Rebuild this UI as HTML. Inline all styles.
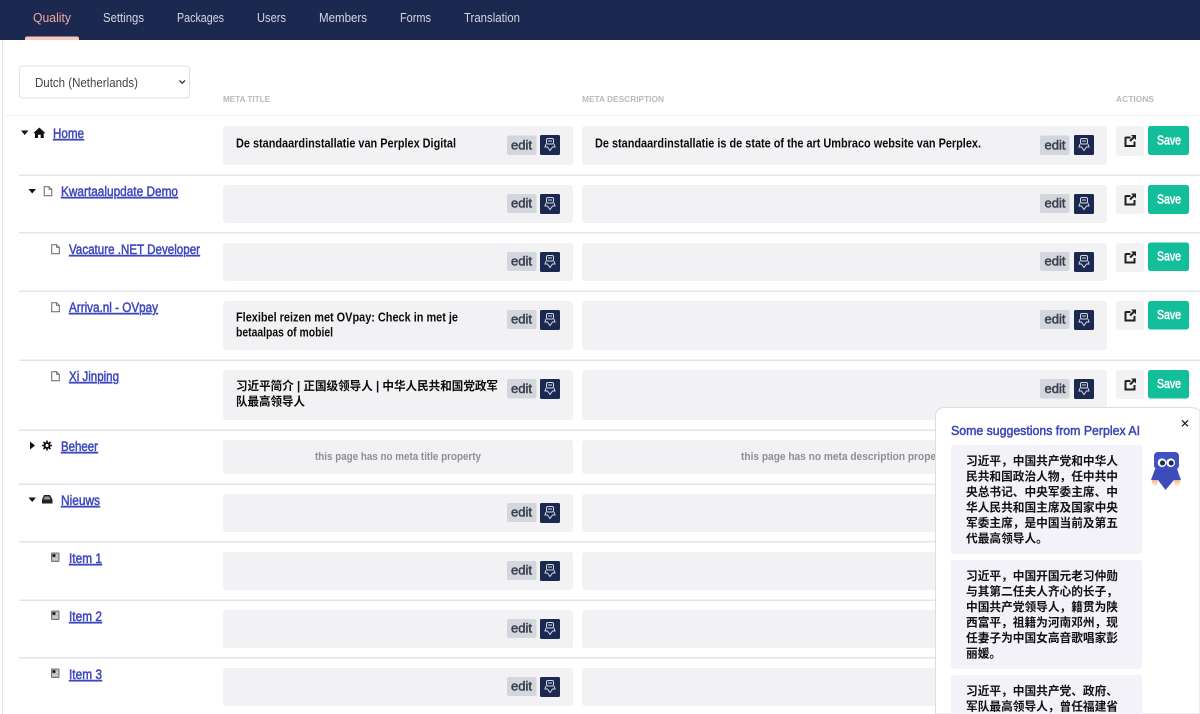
<!DOCTYPE html>
<html><head><meta charset="utf-8"><title>Quality</title>
<style>
html,body{margin:0;padding:0;background:#fff;width:1200px;height:714px;overflow:hidden}
svg{display:block;font-family:"Liberation Sans","Noto Sans CJK SC",sans-serif}
.n{font-size:13px;fill:#d5d8e2}
.h{font-size:8.5px;font-weight:700;fill:#b9b9c1}
.l{font-size:13.5px;fill:#3d48bc;stroke:#3d48bc;stroke-width:.5px;text-decoration:underline}
.t{font-size:12.5px;font-weight:700;fill:#0c0c0c}
.e{font-size:13px;fill:#3a3f4d;stroke:#3a3f4d;stroke-width:.5px}
.s{font-size:12.5px;fill:#fff;stroke:#fff;stroke-width:.5px}
.g{font-size:11px;font-weight:700;fill:#8e8e95}
.c{font-size:11.7px;font-weight:700;fill:#111}
</style></head><body>
<svg xmlns="http://www.w3.org/2000/svg" width="1200" height="714" viewBox="0 0 1200 714">
<defs>
<g id="b"><rect width="20" height="20" rx="1.5" fill="#1b2850"/><g fill="none" stroke="#d5d9e6" stroke-width="1"><rect x="6.500" y="3.500" width="7" height="5.500" rx="1.500"/><path d="M8 6h4"/><path d="M6 9 5 12H7.500L10 15.500 12.500 12H15L14 9"/></g></g>
<g id="o"><path d="M1 2.500H6M1 2V11H10V6.500" fill="none" stroke="#222" stroke-width="2"/><path d="M6.500 0H11.500V5L9.800 3.300 6.300 6.800 4.800 5.300 8.300 1.700Z" fill="#222"/></g>
<g id="d"><path d="M.7.7H5.500L8.300 3.500V9.800H.7Z" fill="#fff" stroke="#666" stroke-width="1"/><path d="M5.500.7V3.500H8.300" fill="none" stroke="#666" stroke-width=".8"/></g>
<g id="i"><rect width="8.500" height="9.500" rx="1" fill="#777"/><rect x="1" y="1" width="6.500" height="7.500" fill="#aaa"/><rect x="1.500" y="1.800" width="2.800" height="2.500" fill="#111"/><path d="M5 2.400H7.200M5 3.800H7.200M1.500 5.600H7.200M1.500 7.200H7.200" stroke="#ddd" stroke-width=".8"/></g>
<linearGradient id="f" x1="0" y1="0" x2="0" y2="1"><stop offset="0" stop-color="#f2b48a"/><stop offset="1" stop-color="#fdf1e8"/></linearGradient>
</defs>

<rect x="0" y="0" width="1200" height="40" fill="#1b2850"/>
<path d="M25 40V38.500Q25 36.500 27 36.500H77Q79 36.500 79 38.500V40Z" fill="#fbc7c1"/>
<text x="33" y="22" class="n" style="fill:#f4a9a0" textLength="38" lengthAdjust="spacingAndGlyphs">Quality</text>
<text x="103" y="22" class="n" textLength="41" lengthAdjust="spacingAndGlyphs">Settings</text>
<text x="177" y="22" class="n" textLength="47" lengthAdjust="spacingAndGlyphs">Packages</text>
<text x="257" y="22" class="n" textLength="29" lengthAdjust="spacingAndGlyphs">Users</text>
<text x="319" y="22" class="n" textLength="48" lengthAdjust="spacingAndGlyphs">Members</text>
<text x="400" y="22" class="n" textLength="31" lengthAdjust="spacingAndGlyphs">Forms</text>
<text x="464" y="22" class="n" textLength="56" lengthAdjust="spacingAndGlyphs">Translation</text>

<rect x="2" y="40" width="1" height="674" fill="#e2e2e6"/>
<rect x="3" y="115" width="1197" height="1" fill="#f4f4f6"/>

<rect x="19.500" y="66" width="170" height="32" rx="3" fill="#fff" stroke="#e1e1e5"/>
<text x="35" y="87" font-size="12.500" fill="#444" textLength="103" lengthAdjust="spacingAndGlyphs">Dutch (Netherlands)</text>
<path d="M179.500 80.500 182.200 83.200 185 80.500" fill="none" stroke="#333" stroke-width="1.300"/>

<text x="223" y="102" class="h" textLength="47" lengthAdjust="spacingAndGlyphs">META TITLE</text>
<text x="582" y="102" class="h" textLength="82" lengthAdjust="spacingAndGlyphs">META DESCRIPTION</text>
<text x="1116" y="102" class="h" textLength="38" lengthAdjust="spacingAndGlyphs">ACTIONS</text>

<g fill="#e4e4ea">
<rect x="19" y="174.500" width="1181" height="1.500"/>
<rect x="19" y="232" width="1181" height="1.500"/>
<rect x="19" y="290.500" width="1181" height="1.500"/>
<rect x="19" y="359.500" width="1181" height="1.500"/>
<rect x="19" y="429.500" width="1181" height="1.500"/>
<rect x="19" y="483.500" width="1181" height="1.500"/>
<rect x="19" y="541" width="1181" height="1.500"/>
<rect x="19" y="599.500" width="1181" height="1.500"/>
<rect x="19" y="657" width="1181" height="1.500"/>
</g>

<g fill="#f2f2f4">
<rect x="223" y="126" width="350" height="39" rx="3"/><rect x="582" y="126" width="525" height="39" rx="3"/><rect x="1116" y="126" width="28" height="30" rx="3"/>
<rect x="223" y="185" width="350" height="38" rx="3"/><rect x="582" y="185" width="525" height="38" rx="3"/><rect x="1116" y="185" width="28" height="29" rx="3"/>
<rect x="223" y="243" width="350" height="38" rx="3"/><rect x="582" y="243" width="525" height="38" rx="3"/><rect x="1116" y="243" width="28" height="29" rx="3"/>
<rect x="223" y="301" width="350" height="49" rx="3"/><rect x="582" y="301" width="525" height="49" rx="3"/><rect x="1116" y="301" width="28" height="29" rx="3"/>
<rect x="223" y="370" width="350" height="50" rx="3"/><rect x="582" y="370" width="525" height="50" rx="3"/><rect x="1116" y="370" width="28" height="29" rx="3"/>
<rect x="223" y="440" width="350" height="34" rx="3"/><rect x="582" y="440" width="525" height="34" rx="3"/>
<rect x="223" y="494" width="350" height="38" rx="3"/><rect x="582" y="494" width="525" height="38" rx="3"/>
<rect x="223" y="552" width="350" height="38" rx="3"/><rect x="582" y="552" width="525" height="38" rx="3"/>
<rect x="223" y="610" width="350" height="38" rx="3"/><rect x="582" y="610" width="525" height="38" rx="3"/>
<rect x="223" y="668" width="350" height="38" rx="3"/><rect x="582" y="668" width="525" height="38" rx="3"/>
</g>

<g fill="#d4d6dd">
<rect x="507" y="135.500" width="29.500" height="19.500" rx="2"/><rect x="1040" y="135.500" width="29.500" height="19.500" rx="2"/>
<rect x="507" y="194" width="29.500" height="19" rx="2"/><rect x="1040" y="194" width="29.500" height="19" rx="2"/>
<rect x="507" y="252" width="29.500" height="19" rx="2"/><rect x="1040" y="252" width="29.500" height="19" rx="2"/>
<rect x="507" y="310" width="29.500" height="19" rx="2"/><rect x="1040" y="310" width="29.500" height="19" rx="2"/>
<rect x="507" y="379" width="29.500" height="19.500" rx="2"/><rect x="1040" y="379" width="29.500" height="19.500" rx="2"/>
<rect x="507" y="503" width="29.500" height="19" rx="2"/>
<rect x="507" y="561" width="29.500" height="19" rx="2"/>
<rect x="507" y="619" width="29.500" height="19" rx="2"/>
<rect x="507" y="677" width="29.500" height="19" rx="2"/>
</g>
<g>
<text x="511" y="149.500" class="e" textLength="21" lengthAdjust="spacingAndGlyphs">edit</text><text x="1044.500" y="149.500" class="e" textLength="21" lengthAdjust="spacingAndGlyphs">edit</text>
<text x="511" y="207.500" class="e" textLength="21" lengthAdjust="spacingAndGlyphs">edit</text><text x="1044.500" y="207.500" class="e" textLength="21" lengthAdjust="spacingAndGlyphs">edit</text>
<text x="511" y="265.500" class="e" textLength="21" lengthAdjust="spacingAndGlyphs">edit</text><text x="1044.500" y="265.500" class="e" textLength="21" lengthAdjust="spacingAndGlyphs">edit</text>
<text x="511" y="323.500" class="e" textLength="21" lengthAdjust="spacingAndGlyphs">edit</text><text x="1044.500" y="323.500" class="e" textLength="21" lengthAdjust="spacingAndGlyphs">edit</text>
<text x="511" y="393" class="e" textLength="21" lengthAdjust="spacingAndGlyphs">edit</text><text x="1044.500" y="393" class="e" textLength="21" lengthAdjust="spacingAndGlyphs">edit</text>
<text x="511" y="516.500" class="e" textLength="21" lengthAdjust="spacingAndGlyphs">edit</text>
<text x="511" y="574.500" class="e" textLength="21" lengthAdjust="spacingAndGlyphs">edit</text>
<text x="511" y="632.500" class="e" textLength="21" lengthAdjust="spacingAndGlyphs">edit</text>
<text x="511" y="690.500" class="e" textLength="21" lengthAdjust="spacingAndGlyphs">edit</text>
</g>
<use href="#b" x="540" y="135"/><use href="#b" x="1074" y="135"/>
<use href="#b" x="540" y="194"/><use href="#b" x="1074" y="194"/>
<use href="#b" x="540" y="252"/><use href="#b" x="1074" y="252"/>
<use href="#b" x="540" y="310"/><use href="#b" x="1074" y="310"/>
<use href="#b" x="540" y="379"/><use href="#b" x="1074" y="379"/>
<use href="#b" x="540" y="503"/><use href="#b" x="540" y="561"/><use href="#b" x="540" y="619"/><use href="#b" x="540" y="677"/>

<use href="#o" x="1124.500" y="135"/><use href="#o" x="1124.500" y="193.500"/><use href="#o" x="1124.500" y="251.500"/><use href="#o" x="1124.500" y="309.500"/><use href="#o" x="1124.500" y="378.500"/>

<g fill="#13bf9b">
<rect x="1148" y="126" width="41" height="29" rx="2.500"/>
<rect x="1148" y="185" width="41" height="29" rx="2.500"/>
<rect x="1148" y="242.500" width="41" height="28.500" rx="2.500"/>
<rect x="1148" y="301" width="41" height="28.500" rx="2.500"/>
<rect x="1148" y="370" width="41" height="28.500" rx="2.500"/>
</g>
<text x="1157" y="144.500" class="s" textLength="24" lengthAdjust="spacingAndGlyphs">Save</text>
<text x="1157" y="203.500" class="s" textLength="24" lengthAdjust="spacingAndGlyphs">Save</text>
<text x="1157" y="260.500" class="s" textLength="24" lengthAdjust="spacingAndGlyphs">Save</text>
<text x="1157" y="319" class="s" textLength="24" lengthAdjust="spacingAndGlyphs">Save</text>
<text x="1157" y="388" class="s" textLength="24" lengthAdjust="spacingAndGlyphs">Save</text>

<text x="236" y="147.500" class="t" textLength="220" lengthAdjust="spacingAndGlyphs">De standaardinstallatie van Perplex Digital</text>
<text x="595" y="147.500" class="t" textLength="386" lengthAdjust="spacingAndGlyphs">De standaardinstallatie is de state of the art Umbraco website van Perplex.</text>
<text x="236" y="321.500" class="t" textLength="222" lengthAdjust="spacingAndGlyphs">Flexibel reizen met OVpay: Check in met je</text>
<text x="236" y="336.500" class="t" textLength="97" lengthAdjust="spacingAndGlyphs">betaalpas of mobiel</text>
<text x="236" y="390" class="t" style="font-size:12px" textLength="262" lengthAdjust="spacingAndGlyphs">习近平简介 | 正国级领导人 | 中华人民共和国党政军</text>
<text x="236" y="405.500" class="t" style="font-size:12px" textLength="69" lengthAdjust="spacingAndGlyphs">队最高领导人</text>
<text x="315" y="460" class="g" textLength="166" lengthAdjust="spacingAndGlyphs">this page has no meta title property</text>
<text x="741" y="460" class="g" textLength="208" lengthAdjust="spacingAndGlyphs">this page has no meta description property</text>

<path d="M21 130.500H28.500L24.700 135Z" fill="#111"/>
<path d="M39.300 127.500 45.500 133.300H43.700V138H40.700V134.800H38V138H35V133.300H33.200Z" fill="#111"/>
<text x="53" y="138" class="l" textLength="31" lengthAdjust="spacingAndGlyphs">Home</text>

<path d="M28.500 189H36L32.200 193.500Z" fill="#111"/>
<use href="#d" x="43.500" y="186"/>
<text x="61" y="196" class="l" textLength="117" lengthAdjust="spacingAndGlyphs">Kwartaalupdate Demo</text>

<use href="#d" x="51" y="244"/>
<text x="69" y="254" class="l" textLength="131" lengthAdjust="spacingAndGlyphs">Vacature .NET Developer</text>

<use href="#d" x="51" y="302"/>
<text x="69" y="312" class="l" textLength="89" lengthAdjust="spacingAndGlyphs">Arriva.nl - OVpay</text>

<use href="#d" x="51" y="371"/>
<text x="69" y="381" class="l" textLength="50" lengthAdjust="spacingAndGlyphs">Xi Jinping</text>

<path d="M30 441.500V449.500L35 445.500Z" fill="#111"/>
<path d="M47 440.500V450.500M42 445.500H52M43.500 442 50.500 449M50.500 442 43.500 449" stroke="#111" stroke-width="1.600"/>
<circle cx="47" cy="445.500" r="3.400" fill="#111"/>
<circle cx="47" cy="445.500" r="1.500" fill="#fff"/>
<text x="61" y="451" class="l" textLength="37" lengthAdjust="spacingAndGlyphs">Beheer</text>

<path d="M28.500 497.500H36L32.200 502Z" fill="#111"/>
<path d="M44 495H50L52.500 499.500V503.500H42V499.500Z" fill="#222"/>
<path d="M44.800 496.500H49.200L50.500 499.500H43.500Z" fill="#999"/>
<text x="61" y="505" class="l" textLength="39" lengthAdjust="spacingAndGlyphs">Nieuws</text>

<use href="#i" x="51" y="552.500"/>
<text x="69" y="563" class="l" textLength="33" lengthAdjust="spacingAndGlyphs">Item 1</text>
<use href="#i" x="51" y="610.500"/>
<text x="69" y="621" class="l" textLength="33" lengthAdjust="spacingAndGlyphs">Item 2</text>
<use href="#i" x="51" y="668.500"/>
<text x="69" y="679" class="l" textLength="33" lengthAdjust="spacingAndGlyphs">Item 3</text>

<path d="M935.500 714V417Q935.500 407.500 945 407.500H1190Q1197 407.500 1200 411V714Z" fill="#fff" stroke="#dcdce2"/>
<text x="951" y="435" font-size="13" fill="#3b46b4" stroke="#3b46b4" stroke-width=".5" textLength="189" lengthAdjust="spacingAndGlyphs">Some suggestions from Perplex AI</text>
<path d="M1182 420.300 1188 426.300M1188 420.300 1182 426.300" stroke="#222" stroke-width="1.300"/>

<rect x="951" y="445" width="191" height="109" rx="3" fill="#f2f2f8"/>
<rect x="951" y="560" width="191" height="109" rx="3" fill="#f2f2f8"/>
<path d="M951 714V678Q951 675 954 675H1139Q1142 675 1142 678V714Z" fill="#f2f2f8"/>

<g>
<text class="c" x="966" y="465">习近平，中国共产党和中华人</text>
<text class="c" x="966" y="480.500">民共和国政治人物，任中共中</text>
<text class="c" x="966" y="496">央总书记、中央军委主席、中</text>
<text class="c" x="966" y="511.500">华人民共和国主席及国家中央</text>
<text class="c" x="966" y="527">军委主席，是中国当前及第五</text>
<text class="c" x="966" y="542.500">代最高领导人。</text>
<text class="c" x="966" y="580">习近平，中国开国元老习仲勋</text>
<text class="c" x="966" y="595.500">与其第二任夫人齐心的长子，</text>
<text class="c" x="966" y="611">中国共产党领导人，籍贯为陕</text>
<text class="c" x="966" y="626.500">西富平，祖籍为河南邓州，现</text>
<text class="c" x="966" y="642">任妻子为中国女高音歌唱家彭</text>
<text class="c" x="966" y="657.500">丽媛。</text>
<text class="c" x="966" y="695">习近平，中国共产党、政府、</text>
<text class="c" x="966" y="710.500">军队最高领导人，曾任福建省</text>
</g>

<path d="M1151.500 480H1158L1157 486H1153ZM1174 480H1180.500L1179 486H1175Z" fill="url(#f)"/>
<path d="M1155 469H1177L1181 480H1174L1165.500 490 1158 480H1151Z" fill="#3e4cb9"/>
<rect x="1154" y="452" width="25" height="17.500" rx="4" fill="#4150c2"/>
<circle cx="1162" cy="462.700" r="4.300" fill="#fff"/><circle cx="1170.700" cy="462.700" r="4.300" fill="#fff"/>
<circle cx="1162.500" cy="463" r="2.500" fill="#1b2850"/><circle cx="1171.200" cy="463" r="2.500" fill="#1b2850"/>
</svg>
</body></html>
